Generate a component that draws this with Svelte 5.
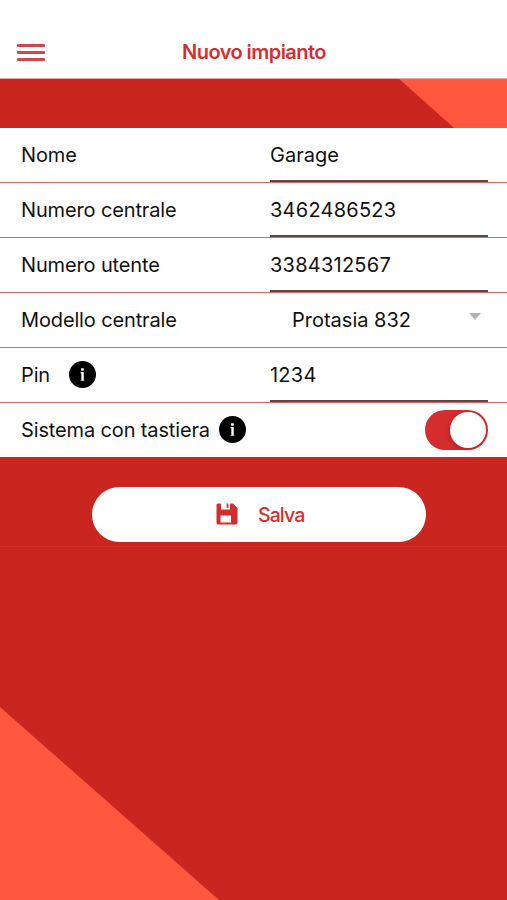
<script>
	let menuLabel = "Menu";
	let nome = $state("Garage");
	let centrale = $state("3462486523");
	let utente = $state("3384312567");
	let pin = $state("1234");
	let tastiera = $state(true);
</script>

{#snippet info()}
	<svg class="info" viewBox="0 0 28 28" aria-hidden="true">
		<circle cx="14" cy="14" r="14" fill="#000" />
		<rect x="12.6" y="7.4" width="2.8" height="2.6" rx="0.5" fill="#fff" />
		<path d="M12 11.5h3.3v8.9h-2.5v-7.7h-0.8z" fill="#fff" />
		<path d="M12 19.6h4v0.9h-4z" fill="#bbb" />
	</svg>
{/snippet}

<div class="screen">
	<svg class="shapes" viewBox="0 0 507 900" aria-hidden="true">
		<polygon points="398,78 507,78 507,175" />
		<polygon points="0,707 219,900 0,900" />
	</svg>

	<header>
		<button class="menu" aria-label={menuLabel}>
			<span></span>
			<span></span>
			<span></span>
		</button>
		<h1>Nuovo impianto</h1>
	</header>

	<form>
		<div class="row">
			<label for="nome">Nome</label>
			<input id="nome" bind:value={nome} />
		</div>
		<div class="row">
			<label for="centrale">Numero centrale</label>
			<input id="centrale" class="number" bind:value={centrale} />
		</div>
		<div class="row">
			<label for="utente">Numero utente</label>
			<input id="utente" class="number" bind:value={utente} />
		</div>
		<div class="row">
			<span class="label">Modello centrale</span>
			<div class="select">
				<span>Protasia 832</span>
				<svg viewBox="0 0 12 7" aria-hidden="true"><path d="M0 0h12L6 7z" fill="#b3b3b3" /></svg>
			</div>
		</div>
		<div class="row">
			<label for="pin" class="pin">Pin {@render info()}</label>
			<input id="pin" class="number" bind:value={pin} />
		</div>
		<div class="row">
			<span class="label">Sistema con tastiera {@render info()}</span>
			<button
				type="button"
				class="toggle"
				class:on={tastiera}
				aria-label="Sistema con tastiera"
				onclick={() => (tastiera = !tastiera)}
			>
				<span></span>
			</button>
		</div>
	</form>

	<div class="actions">
		<button class="save">
			<svg viewBox="0 0 22 22" aria-hidden="true">
				<path
					fill-rule="evenodd"
					d="M2 0.5H5V6.5H14V0.5H17L21.5 5V19.5Q21.5 21.5 19.5 21.5H2Q0.5 21.5 0.5 19.5V2Q0.5 0.5 2 0.5ZM4.5 12.5V19.5H15V12.5Z"
				/>
				<path d="M10.6 0.5h1.8v4.4h-1.8z" />
			</svg>
			<span>Salva</span>
		</button>
	</div>
</div>

<style>
	.screen {
		position: relative;
		height: 900px;
		overflow: hidden;
		background: #ca261f;
		color: #111;
		font-family: Inter, "Liberation Sans", sans-serif;
		font-size: 20px;
	}

	.shapes {
		position: absolute;
		inset: 0;
		width: 507px;
		height: 900px;
		fill: #ff583f;
	}

	header,
	form,
	.actions {
		position: relative;
	}

	button {
		padding: 0;
		border: none;
		font: inherit;
	}

	header {
		display: grid;
		grid-template-columns: 46px 1fr 46px;
		align-items: center;
		box-sizing: border-box;
		height: 79px;
		padding-top: 26px;
		border-bottom: 1px solid #eba7a4;
		background: #fff;
	}

	.menu {
		display: flex;
		flex-direction: column;
		gap: 4px;
		width: 28px;
		margin-left: 17px;
		background: none;
	}

	.menu span {
		height: 3px;
		border-radius: 1px;
		background: #d2464b;
	}

	h1 {
		margin: 0;
		padding-left: 1px;
		color: #d32f2f;
		font-size: 20px;
		font-weight: 600;
		letter-spacing: -0.55px;
		line-height: 24px;
		text-align: center;
	}

	form {
		margin-top: 49px;
		background: #fff;
	}

	.row {
		display: flex;
		box-sizing: border-box;
		height: 55px;
		padding: 0 19px 0 21px;
		border-bottom: 1px solid #d9686a;
	}

	.row:last-child {
		border-bottom: none;
		height: 54px;
	}

	label,
	.label {
		display: flex;
		align-items: center;
		width: 249px;
		letter-spacing: -0.14px;
	}

	.info {
		width: 27px;
		height: 27px;
		margin-left: 9px;
		margin-top: -1px;
	}

	.pin .info {
		margin-left: 19px;
	}

	input {
		flex: 1;
		box-sizing: border-box;
		min-width: 0;
		height: 54px;
		padding: 2px 0 0;
		border: none;
		border-bottom: 2px solid #5f4546;
		border-radius: 0;
		outline: none;
		background: none;
		color: inherit;
		font: inherit;
	}

	.number {
		letter-spacing: 0.24px;
	}

	.select {
		display: flex;
		flex: 1;
		align-items: center;
		justify-content: space-between;
		padding: 0 7px 0 22px;
	}

	.select svg {
		width: 12px;
		height: 7px;
		margin-top: -7px;
	}

	.toggle {
		display: flex;
		box-sizing: border-box;
		width: 63px;
		height: 40px;
		margin: 7px 0 0 auto;
		padding: 2px;
		border-radius: 20px;
		background: #ddd;
	}

	.toggle.on {
		justify-content: flex-end;
		background: #d52c2d;
	}

	.toggle span {
		width: 36px;
		height: 36px;
		border-radius: 50%;
		background: #fff;
		box-shadow: -1px 2px 4px rgba(0, 0, 0, 0.2);
	}

	.actions {
		display: flex;
		justify-content: center;
		box-sizing: border-box;
		height: 90px;
		padding: 30px 0 0 11px;
		border-bottom: 1px solid #d03029;
	}

	.save {
		display: flex;
		align-items: center;
		box-sizing: border-box;
		width: 334px;
		height: 55px;
		padding-left: 124px;
		border-radius: 28px;
		background: #fff;
		color: #d32f2f;
		font-size: 19.5px;
		font-weight: 500;
		letter-spacing: -0.9px;
	}

	.save svg {
		width: 22px;
		height: 22px;
		margin-right: 20px;
		margin-top: -1px;
		fill: #d52c2f;
	}
</style>
